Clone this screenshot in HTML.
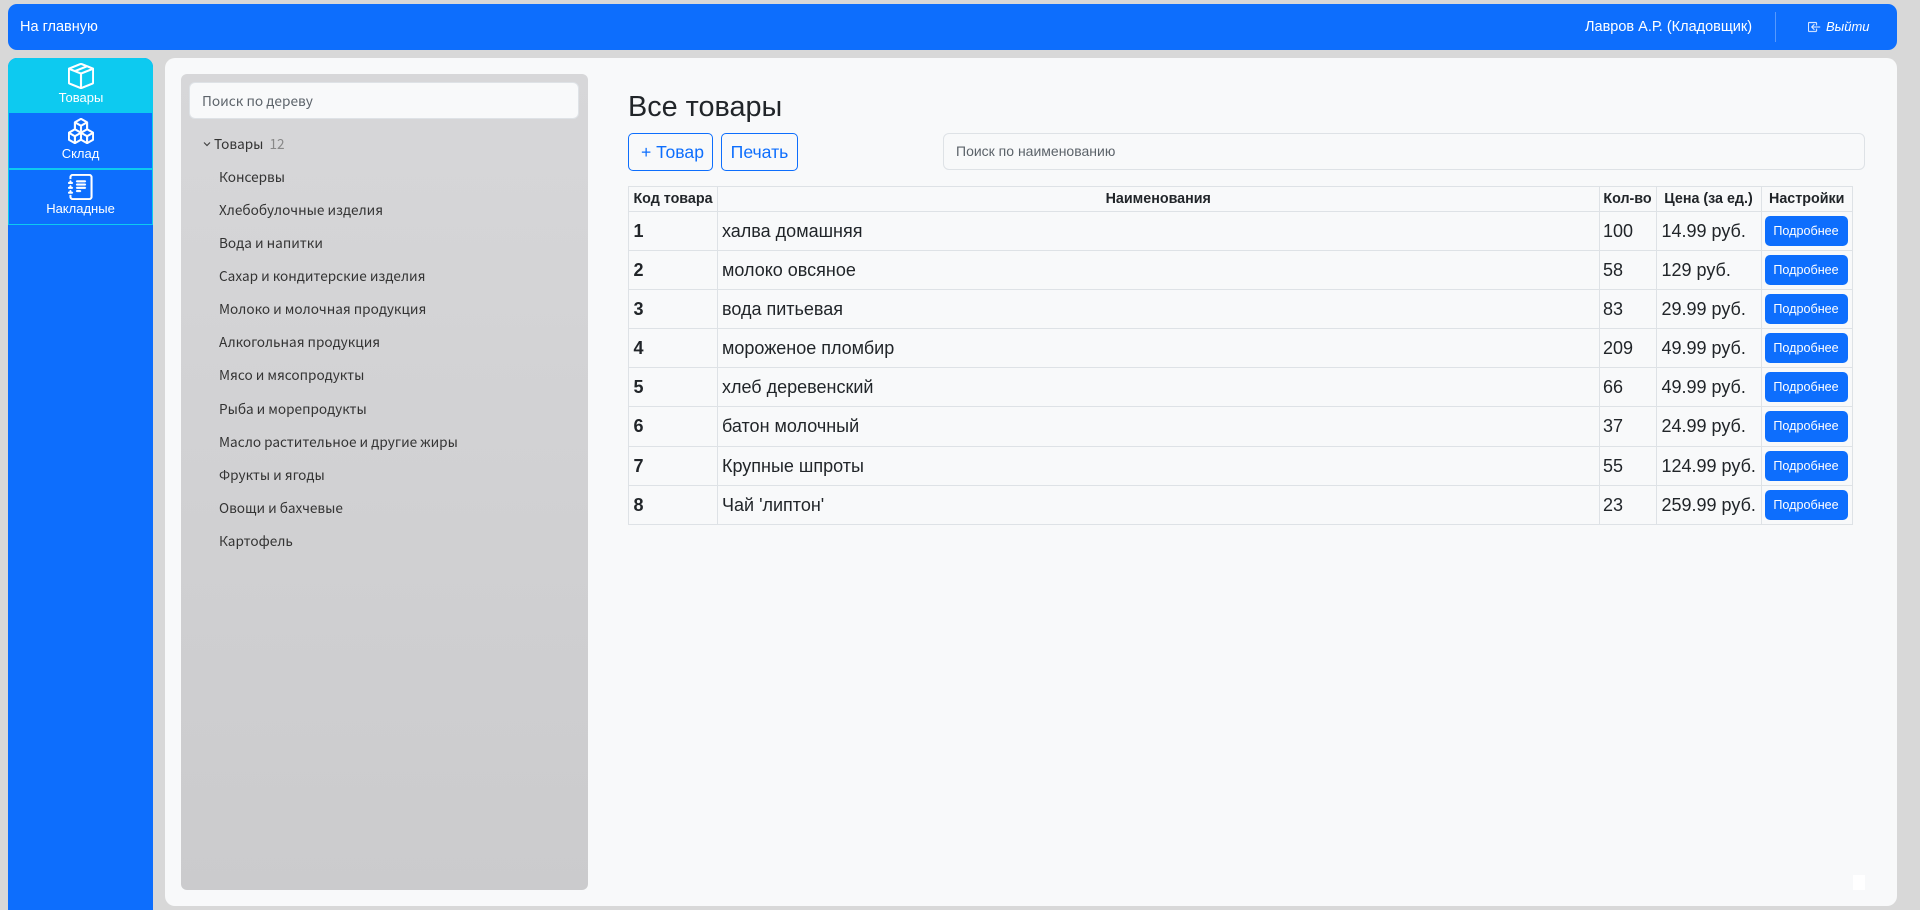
<!DOCTYPE html>
<html lang="ru"><head><meta charset="utf-8"><title>Все товары</title>
<style>
*{box-sizing:border-box}
html,body{margin:0;padding:0;width:1920px;height:910px;overflow:hidden;background:#d8d8d8;font-family:"Liberation Sans",sans-serif;color:#212529}
.a{position:absolute}
.t{position:absolute;white-space:nowrap}
#top{left:8px;top:4px;width:1889px;height:46px;background:#0d6efd;border-radius:9px}
#side{left:8px;top:58px;width:145px;height:852px;background:#0d6efd;border-radius:9px 9px 0 0;overflow:hidden}
.si{position:absolute;left:0;width:145px;color:#fff;text-align:center;font-size:13px}
.si svg{position:absolute;fill:#fff;stroke:#fff;stroke-width:.3}
.si span{position:absolute;left:0;right:0;line-height:16px}
#main{left:165px;top:58px;width:1732px;height:848px;background:#f8f9fa;border-radius:10px}
#tree{left:181px;top:74px;width:407px;height:816px;background:linear-gradient(#d7d7d9,#cbcbcd);border-radius:6px}
#ts{left:189px;top:82px;width:390px;height:37px;background:#f8f9fa;border:1px solid #dee2e6;border-radius:6px;font:13.7px/34px "Noto Sans CJK JP",sans-serif;color:#5c636a;padding-left:12px}
.n{position:absolute;left:219px;font:13.6px/20px "Noto Sans CJK JP",sans-serif;color:#333;white-space:nowrap}
.btn{position:absolute;top:133px;height:38px;border:1px solid #0d6efd;border-radius:5px;color:#0d6efd;font-size:17.6px;line-height:36px;text-align:center;white-space:nowrap}
#s2{left:943px;top:133px;width:922px;height:37px;border:1px solid #dee2e6;border-radius:6px;background:#f8f9fa;font-size:14px;line-height:35px;color:#5c636a;padding-left:12px}
table{position:absolute;left:628px;top:186px;width:1224px;border-collapse:collapse;table-layout:fixed}
th,td{border:1px solid #dee2e6;padding:0 4px;white-space:nowrap}
th{font-size:14.3px;height:25px;font-weight:700;text-align:center;padding:0 1px}
td{font-size:18px;height:39px;line-height:20px;padding-bottom:1px}
tr.l td{height:40px}
td:first-child{font-weight:700;padding-left:4.5px}
td:nth-child(3){padding-left:3.5px}
td:nth-child(4){padding-left:5px}
td b{display:block;width:83px;height:30px;background:#0d6efd;border-radius:5px;color:#fff;font-size:12.6px;font-weight:400;line-height:30px;text-align:center}
tr.l b{height:31px;line-height:31px}
td:last-child{padding:0 0 0 3px}
</style></head>
<body>
<div id="top" class="a"></div>
<div class="t" style="left:20px;top:18px;font-size:14.5px;line-height:18px;color:#fff">На главную</div>
<div class="t" style="left:1585px;top:18px;font-size:14.5px;line-height:18px;color:#fff">Лавров А.Р. (Кладовщик)</div>
<div class="a" style="left:1775px;top:12px;width:1px;height:30px;background:rgba(255,255,255,.3)"></div>
<svg class="a" style="left:1808px;top:19px" width="13" height="16" viewBox="0 0 16 16" fill="#e9f0ff" stroke="#e9f0ff" stroke-width=".4"><path d="M10 3.5a.5.5 0 0 0-.5-.5h-8a.5.5 0 0 0-.5.5v9a.5.5 0 0 0 .5.5h8a.5.5 0 0 0 .5-.5v-2a.5.5 0 0 1 1 0v2A1.5 1.5 0 0 1 9.5 14h-8A1.5 1.5 0 0 1 0 12.5v-9A1.5 1.5 0 0 1 1.5 2h8A1.5 1.5 0 0 1 11 3.5v2a.5.5 0 0 1-1 0v-2z"/><path d="M4.146 8.354a.5.5 0 0 1 0-.708l3-3a.5.5 0 1 1 .708.708L5.707 7.5H14.5a.5.5 0 0 1 0 1H5.707l2.147 2.146a.5.5 0 0 1-.708.708l-3-3z"/></svg>
<div class="t" style="left:1826px;top:18px;font-size:13px;line-height:18px;font-style:italic;color:#fff">Выйти</div>

<div id="side" class="a">
 <div class="si" style="top:0;height:55px;background:#0dcaf0">
  <svg style="left:60px;top:5px" width="26" height="26" viewBox="0 0 16 16"><path d="M8.186 1.113a.5.5 0 0 0-.372 0L1.846 3.5l2.404.961L10.404 2l-2.218-.887zm3.564 1.426L5.596 5 8 5.961 14.154 3.5l-2.404-.961zm3.25 1.7-6.5 2.6v7.922l6.5-2.6V4.24zM7.5 14.762V6.838L1 4.239v7.925l6.5 2.6zM7.443.184a1.5 1.5 0 0 1 1.114 0l7.129 2.852A.5.5 0 0 1 16 3.5v8.662a1 1 0 0 1-.629.928l-7.185 2.874a.5.5 0 0 1-.372 0L.63 13.09a1 1 0 0 1-.63-.928V3.5a.5.5 0 0 1 .314-.464L7.443.184z"/></svg>
  <span style="top:32px;left:1px">Товары</span>
 </div>
 <div class="si" style="top:55px;height:57px;border:1px solid #0dcaf0;border-top:0;border-bottom-width:2px">
  <svg style="left:59px;top:5px" width="26" height="26" viewBox="0 0 16 16"><path d="M7.752.066a.5.5 0 0 1 .496 0l3.75 2.143a.5.5 0 0 1 .252.434v3.995l3.498 2A.5.5 0 0 1 16 9.07v4.286a.5.5 0 0 1-.252.434l-3.75 2.143a.5.5 0 0 1-.496 0l-3.502-2-3.502 2.001a.5.5 0 0 1-.496 0l-3.75-2.143A.5.5 0 0 1 0 13.357V9.071a.5.5 0 0 1 .252-.434L3.75 6.638V2.643a.5.5 0 0 1 .252-.434L7.752.066ZM4.25 7.504 1.508 9.071l2.742 1.567 2.742-1.567L4.25 7.504ZM7.5 9.933l-2.75 1.571v3.134l2.75-1.571V9.933Zm1 3.134 2.75 1.571v-3.134L8.5 9.933v3.134Zm.508-3.996 2.742 1.567 2.742-1.567-2.742-1.567-2.742 1.567Zm2.242-2.433V3.504L8.5 5.076V8.21l2.75-1.572ZM7.5 8.21V5.076L4.75 3.504v3.134L7.5 8.21ZM5.258 2.643 8 4.21l2.742-1.567L8 1.076 5.258 2.643ZM15 9.933l-2.75 1.571v3.134L15 13.067V9.933ZM3.75 14.638v-3.134L1 9.933v3.134l2.75 1.571Z"/></svg>
  <span style="top:33px">Склад</span>
 </div>
 <div class="si" style="top:112px;height:55px;border:1px solid #0dcaf0;border-top:0">
  <svg style="left:59px;top:4px" width="26" height="26" viewBox="0 0 16 16"><path d="M5 10.5a.5.5 0 0 1 .5-.5h2a.5.5 0 0 1 0 1h-2a.5.5 0 0 1-.5-.5zm0-2a.5.5 0 0 1 .5-.5h5a.5.5 0 0 1 0 1h-5a.5.5 0 0 1-.5-.5zm0-2a.5.5 0 0 1 .5-.5h5a.5.5 0 0 1 0 1h-5a.5.5 0 0 1-.5-.5zm0-2a.5.5 0 0 1 .5-.5h5a.5.5 0 0 1 0 1h-5a.5.5 0 0 1-.5-.5z"/><path d="M3 0h10a2 2 0 0 1 2 2v12a2 2 0 0 1-2 2H3a2 2 0 0 1-2-2v-1h1v1a1 1 0 0 0 1 1h10a1 1 0 0 0 1-1V2a1 1 0 0 0-1-1H3a1 1 0 0 0-1 1v1H1V2a2 2 0 0 1 2-2z"/><path d="M1 5v-.5a.5.5 0 0 1 1 0V5h.5a.5.5 0 0 1 0 1h-2a.5.5 0 0 1 0-1H1zm0 3v-.5a.5.5 0 0 1 1 0V8h.5a.5.5 0 0 1 0 1h-2a.5.5 0 0 1 0-1H1zm0 3v-.5a.5.5 0 0 1 1 0v.5h.5a.5.5 0 0 1 0 1h-2a.5.5 0 0 1 0-1H1z"/></svg>
  <span style="top:31px">Накладные</span>
 </div>
</div>

<div id="main" class="a"></div>
<div id="tree" class="a"></div>
<div id="ts" class="a">Поиск по дереву</div>
<svg class="a" style="left:203px;top:141px" width="8" height="6" viewBox="0 0 8 6"><path d="M1 1.5 4 4.5 7 1.5" fill="none" stroke="#444" stroke-width="1.2"/></svg>
<div class="n" style="left:214px;top:133px">Товары <span style="color:#888;margin-left:3px">12</span></div>
<div class="n" style="top:166px">Консервы</div>
<div class="n" style="top:199px">Хлебобулочные изделия</div>
<div class="n" style="top:232px">Вода и напитки</div>
<div class="n" style="top:265px">Сахар и кондитерские изделия</div>
<div class="n" style="top:298px">Молоко и молочная продукция</div>
<div class="n" style="top:331px">Алкогольная продукция</div>
<div class="n" style="top:364px">Мясо и мясопродукты</div>
<div class="n" style="top:398px">Рыба и морепродукты</div>
<div class="n" style="top:431px">Масло растительное и другие жиры</div>
<div class="n" style="top:464px">Фрукты и ягоды</div>
<div class="n" style="top:497px">Овощи и бахчевые</div>
<div class="n" style="top:530px">Картофель</div>

<div class="t" style="left:628px;top:88px;font-size:28.8px;line-height:38px">Все товары</div>
<div class="btn" style="left:628px;width:85px;padding-left:4px">+ Товар</div>
<div class="btn" style="left:721px;width:77px">Печать</div>
<div id="s2" class="a">Поиск по наименованию</div>

<table>
<colgroup><col style="width:89px"><col style="width:881.5px"><col style="width:57px"><col style="width:105px"><col style="width:91.5px"></colgroup>
<tr><th>Код товара</th><th>Наименования</th><th>Кол-во</th><th>Цена (за ед.)</th><th>Настройки</th></tr>
<tr><td>1</td><td>халва домашняя</td><td>100</td><td>14.99 руб.</td><td><b>Подробнее</b></td></tr>
<tr><td>2</td><td>молоко овсяное</td><td>58</td><td>129 руб.</td><td><b>Подробнее</b></td></tr>
<tr><td>3</td><td>вода питьевая</td><td>83</td><td>29.99 руб.</td><td><b>Подробнее</b></td></tr>
<tr><td>4</td><td>мороженое пломбир</td><td>209</td><td>49.99 руб.</td><td><b>Подробнее</b></td></tr>
<tr><td>5</td><td>хлеб деревенский</td><td>66</td><td>49.99 руб.</td><td><b>Подробнее</b></td></tr>
<tr class="l"><td>6</td><td>батон молочный</td><td>37</td><td>24.99 руб.</td><td><b>Подробнее</b></td></tr>
<tr><td>7</td><td>Крупные шпроты</td><td>55</td><td>124.99 руб.</td><td><b>Подробнее</b></td></tr>
<tr><td>8</td><td>Чай 'липтон'</td><td>23</td><td>259.99 руб.</td><td><b>Подробнее</b></td></tr>
</table>
<div class="a" style="left:1853px;top:875px;width:12px;height:15px;background:#fff"></div>
</body></html>
